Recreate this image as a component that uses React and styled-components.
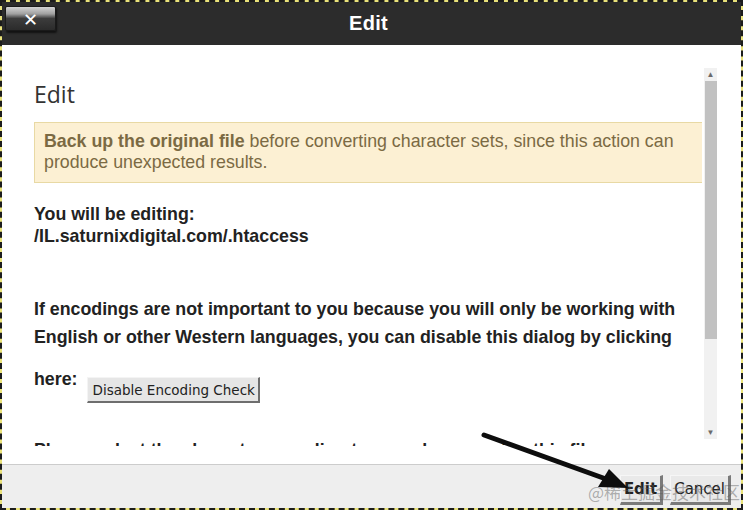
import React from "react";
import styled, { createGlobalStyle } from "styled-components";

const GlobalStyle = createGlobalStyle`
  html, body {
    margin: 0;
    padding: 0;
    background: #ffffff;
  }
  * {
    box-sizing: border-box;
  }
`;

const Frame = styled.div`
  position: relative;
  width: 743px;
  height: 510px;
  border: 2px dashed #1c1c1c;
  background: #e9e27a;
  display: flex;
  flex-direction: column;
  overflow: hidden;
  font-family: "Liberation Sans", Arial, sans-serif;
`;

const TitleBar = styled.div`
  position: relative;
  height: 43px;
  flex: none;
  background: #2c2c2c;
  display: flex;
  align-items: center;
  justify-content: center;
  padding-right: 6px;
`;

const CloseButton = styled.button`
  position: absolute;
  left: 3px;
  top: 4px;
  width: 51px;
  height: 25px;
  border: 1px solid #1a1a1a;
  border-radius: 2px;
  background: linear-gradient(#d4d4d4 0%, #a0a0a0 30%, #3c3c3c 50%, #2b2b2b 100%);
  box-shadow: 1px 2px 2px rgba(0, 0, 0, 0.6);
  color: #ffffff;
  font-family: "DejaVu Sans", sans-serif;
  font-weight: bold;
  font-size: 18px;
  line-height: 1;
  padding: 2px 0 0;
  display: flex;
  align-items: center;
  justify-content: center;
`;

const Title = styled.h1`
  margin: 0;
  color: #ffffff;
  font-size: 20px;
  font-weight: bold;
  letter-spacing: 0.3px;
`;

const Body = styled.div`
  flex: 1;
  min-height: 0;
  background: #ffffff;
  display: flex;
  flex-direction: column;
  padding-bottom: 18px;
`;

const ScrollArea = styled.div`
  flex: 1;
  min-height: 0;
  display: flex;
  overflow: hidden;
`;

const Content = styled.div`
  flex: 1;
  min-width: 0;
  padding: 34px 0 0 32px;
  overflow: hidden;
  color: #222222;
`;

const Heading = styled.h2`
  margin: 0 0 13px;
  font-family: "Open Sans", sans-serif;
  font-weight: 400;
  font-size: 23px;
  line-height: 30px;
  color: #333333;
`;

const Alert = styled.div`
  width: 670px;
  padding: 8px 9px 9px;
  background: #fcf0d3;
  border: 1px solid #e8d9a4;
  color: #7b6a43;
  font-size: 17.8px;
  line-height: 21px;
  b {
    font-weight: bold;
  }
`;

const Strong = styled.p`
  margin: ${({ $top }) => $top || 0}px 0 0;
  font-weight: bold;
  font-size: 17.8px;
  line-height: ${({ $lh }) => $lh || 22}px;
  color: #222222;
  white-space: nowrap;
`;

const HereRow = styled.div`
  display: flex;
  align-items: flex-start;
  gap: 10px;
  margin-top: 14px;
`;

const SmallButton = styled.button`
  margin-top: 12px;
  height: 26px;
  padding: 0 3px 0 4px;
  background: #e6e6e6;
  border: none;
  border-top: 1px solid #f4f4f4;
  border-left: 1px solid #f4f4f4;
  border-right: 2px solid #6e6e6e;
  border-bottom: 2px solid #6e6e6e;
  font-family: "DejaVu Sans", sans-serif;
  font-size: 13.5px;
  color: #222222;
`;

const Scrollbar = styled.div`
  flex: none;
  width: 13px;
  margin: 23px 24px 7px 2px;
  background: #f1f1f1;
  display: flex;
  flex-direction: column;
  align-items: center;
`;

const Arrow = styled.div`
  height: 13px;
  display: flex;
  align-items: center;
  justify-content: center;
  color: #6a6a6a;
  font-size: 8px;
  line-height: 1;
`;

const Thumb = styled.div`
  width: 12px;
  height: 258px;
  background: #c1c1c1;
`;

const Spacer = styled.div`
  flex: 1;
`;

const Footer = styled.div`
  height: 44px;
  flex: none;
  background: #eeeeee;
  border-top: 1px solid #cccccc;
  display: flex;
  justify-content: flex-end;
  align-items: flex-start;
  gap: 7px;
  padding: 10px 10px 0 0;
`;

const FooterButton = styled.button`
  height: 30px;
  padding: 0 3px;
  background: #e9e9e9;
  border: none;
  border-top: 1px solid #f6f6f6;
  border-left: 1px solid #f6f6f6;
  border-right: 3px solid #7a7a7a;
  border-bottom: 3px solid #7a7a7a;
  font-family: "DejaVu Sans", sans-serif;
  font-size: 15px;
  font-weight: ${({ $primary }) => ($primary ? "bold" : "normal")};
  color: #222222;
`;

const Watermark = styled.div`
  position: absolute;
  left: 586px;
  top: 477px;
  font-family: "Noto Sans CJK SC", "DejaVu Sans", sans-serif;
  font-size: 17px;
  color: rgba(90, 90, 90, 0.45);
  pointer-events: none;
  white-space: nowrap;
`;

const Overlay = styled.svg`
  position: absolute;
  left: 0;
  top: 0;
  pointer-events: none;
`;

export default function App() {
  return (
    <>
      <GlobalStyle />
      <Frame>
        <TitleBar>
          <CloseButton aria-label="Close">✕</CloseButton>
          <Title>Edit</Title>
        </TitleBar>
        <Body>
          <ScrollArea>
            <Content>
              <Heading>Edit</Heading>
              <Alert>
                <b>Back up the original file</b> before converting character sets, since this action can
                produce unexpected results.
              </Alert>
              <Strong $top={20}>You will be editing:</Strong>
              <Strong>/IL.saturnixdigital.com/.htaccess</Strong>
              <Strong $top={48} $lh={28}>
                If encodings are not important to you because you will only be working with
                <br />
                English or other Western languages, you can disable this dialog by clicking
              </Strong>
              <HereRow>
                <Strong $lh={28}>here:</Strong>
                <SmallButton>Disable Encoding Check</SmallButton>
              </HereRow>
              <Strong $top={33} $lh={28}>
                Please select the character encoding to use when opening this file.
              </Strong>
            </Content>
            <Scrollbar>
              <Arrow>▲</Arrow>
              <Thumb />
              <Spacer />
              <Arrow>▼</Arrow>
            </Scrollbar>
          </ScrollArea>
        </Body>
        <Footer>
          <FooterButton $primary>Edit</FooterButton>
          <FooterButton>Cancel</FooterButton>
        </Footer>
        <Watermark>@稀土掘金技术社区</Watermark>
        <Overlay width="743" height="510" viewBox="0 0 743 510">
          <line x1="482" y1="433" x2="604" y2="477" stroke="#0d0d0d" strokeWidth="5" strokeLinecap="round" />
          <polygon points="626,486 596,485 607,467" fill="#0d0d0d" />
        </Overlay>
      </Frame>
    </>
  );
}
